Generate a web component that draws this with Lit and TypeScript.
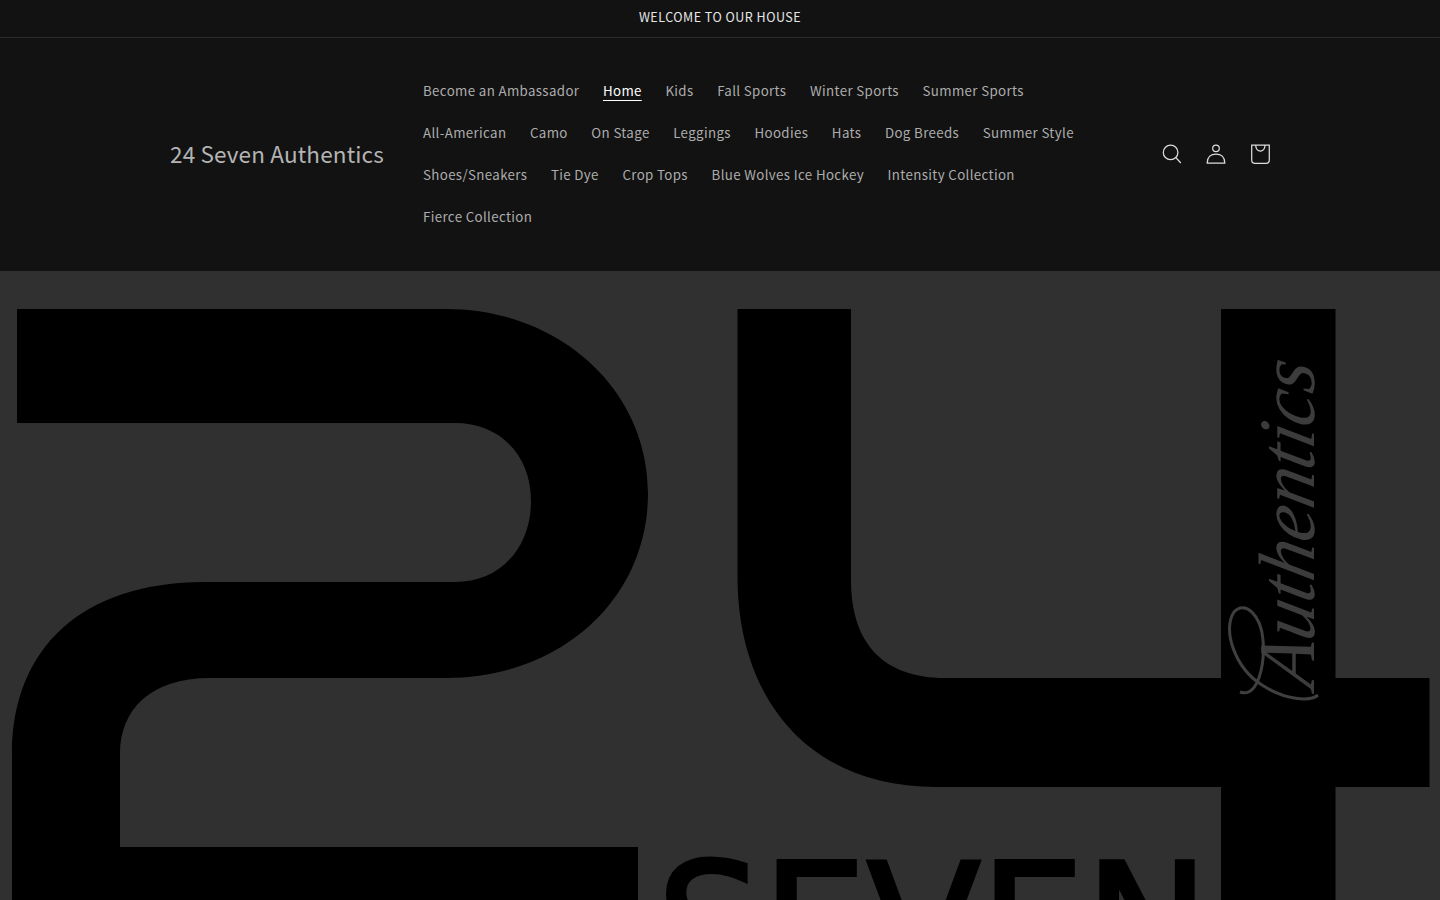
import { LitElement, html, css } from "lit";
import { customElement } from "lit/decorators.js";

const rows = [
  ["Become an Ambassador", "Home", "Kids", "Fall Sports", "Winter Sports", "Summer Sports"],
  ["All-American", "Camo", "On Stage", "Leggings", "Hoodies", "Hats", "Dog Breeds", "Summer Style"],
  ["Shoes/Sneakers", "Tie Dye", "Crop Tops", "Blue Wolves Ice Hockey", "Intensity Collection"],
  ["Fierce Collection"],
];

@customElement("app-root")
export class AppRoot extends LitElement {
  static styles = css`
    :host { display: block; height: 900px; overflow: hidden; background: #121212; font-family: "Noto Sans CJK JP", "Liberation Sans", sans-serif; color: #fff; }
    .announce { height: 32px; padding-bottom: 5px; display: flex; align-items: center; justify-content: center; border-bottom: 1px solid #2a2a2a; font-size: 12.5px; letter-spacing: 0.5px; color: #e7e7e7; }
    .header { height: 233px; box-sizing: border-box; padding: 32px 170px 0; display: flex; align-items: flex-start; }
    .logo { width: 253px; height: 165px; display: flex; align-items: center; font-size: 22.5px; letter-spacing: 0.15px; color: #b4b4b4; flex: none; }
    .nav { width: 729px; flex: none; }
    .row { display: flex; height: 42px; align-items: center; padding-bottom: 1px; box-sizing: border-box; }
    .item { margin-right: 23.6px; font-size: 13.3px; letter-spacing: 0.36px; color: #adadad; white-space: nowrap; line-height: 20px; }
    .item.on { color: #fff; text-decoration: underline; text-underline-offset: 4px; }
    .icons { flex: 1; display: flex; justify-content: flex-end; gap: 4px; height: 166px; align-items: center; }
    .icon { width: 40px; height: 40px; display: block; }
    .hero { height: 629px; background: #303030; }
    .hero svg { display: block; }
  `;
  render() {
    return html`
      <div class="announce">WELCOME TO OUR HOUSE</div>
      <div class="header">
        <div class="logo">24 Seven Authentics</div>
        <nav class="nav">
          ${rows.map((r) => html`<div class="row">${r.map((t) => html`<span class="item ${t === "Home" ? "on" : ""}">${t}</span>`)}</div>`)}
        </nav>
        <div class="icons">
          <svg class="icon" viewBox="0 0 40 40" fill="none" stroke="#dcdcdc" stroke-width="1.25"><circle cx="18.6" cy="19.4" r="7.3"/><path d="M23.9 24.6 L28.8 30"/></svg>
          <svg class="icon" viewBox="0 0 40 40" fill="none" stroke="#dcdcdc" stroke-width="1.25"><circle cx="20" cy="15.3" r="3.3"/><path d="M11.2 30 C11.2 24 15 21 20 21 C25 21 28.8 24 28.8 30 Z"/></svg>
          <svg class="icon" viewBox="0 0 40 40" fill="none" stroke="#dcdcdc" stroke-width="1.25"><path d="M11.7 12 H29.3 V27 Q29.3 30.3 26 30.3 H15 Q11.7 30.3 11.7 27 Z"/><path d="M15.7 12 C15.7 20 25 20 25 12"/></svg>
        </div>
      </div>
      <div class="hero">
        <svg width="1440" height="629" viewBox="0 271 1440 629">
          <path fill="#000" d="M17 309 H446 C560 309 648 390 648 493 C648 600 560 678 446 678 H210 C150 678 120 710 120 754 V847 H638 V901 H12 V754 C12 650 80 582 205 582 H455 C500 582 531 548 531 501 C531 455 500 423 455 423 H17 Z"/>
          <path fill="#000" d="M737.5 309 H851 V580 C851 645 885 678 945 678 H1221 V309 H1335.5 V678 H1429.5 V787 H1335.5 V901 H1221 V787 H936 C810 787 737.5 700 737.5 576 Z"/>
          <text x="657" y="985" font-family="DejaVu Sans" font-size="170" textLength="552" lengthAdjust="spacingAndGlyphs" fill="#000" stroke="#000" stroke-width="4">SEVEN</text>
          <text transform="translate(1314 690) rotate(-90) skewX(-12)" font-family="Liberation Serif" font-style="italic" font-size="80" textLength="325" lengthAdjust="spacingAndGlyphs" fill="#3c3c3c">Authentics</text>
          <path fill="none" stroke="#3f3f3f" stroke-width="3" d="M1240 692 C1258 698 1265 665 1263 640 C1261 615 1245 600 1234 612 C1222 630 1235 668 1262 685 C1285 700 1310 702 1318 695"/>
        </svg>
      </div>
    `;
  }
}
